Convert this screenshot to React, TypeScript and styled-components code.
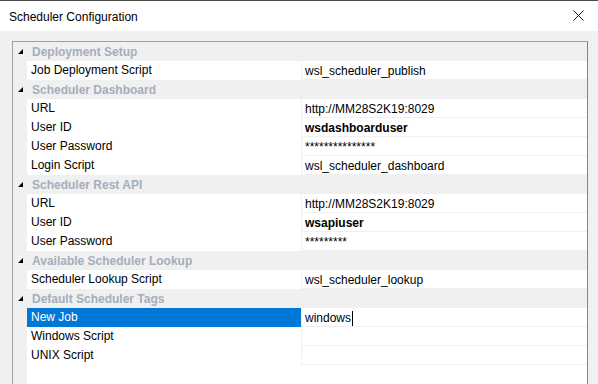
import React from "react";
import styled, { createGlobalStyle } from "styled-components";

type Item = { label: string; value?: string; bold?: boolean; selected?: boolean; editing?: boolean };
type Category = { title: string; items: Item[] };

const categories: Category[] = [
  { title: "Deployment Setup", items: [{ label: "Job Deployment Script", value: "wsl_scheduler_publish" }] },
  {
    title: "Scheduler Dashboard",
    items: [
      { label: "URL", value: "http://MM28S2K19:8029" },
      { label: "User ID", value: "wsdashboarduser", bold: true },
      { label: "User Password", value: "***************" },
      { label: "Login Script", value: "wsl_scheduler_dashboard" },
    ],
  },
  {
    title: "Scheduler Rest API",
    items: [
      { label: "URL", value: "http://MM28S2K19:8029" },
      { label: "User ID", value: "wsapiuser", bold: true },
      { label: "User Password", value: "*********" },
    ],
  },
  { title: "Available Scheduler Lookup", items: [{ label: "Scheduler Lookup Script", value: "wsl_scheduler_lookup" }] },
  {
    title: "Default Scheduler Tags",
    items: [
      { label: "New Job", value: "windows", selected: true, editing: true },
      { label: "Windows Script" },
      { label: "UNIX Script" },
    ],
  },
];

function App() {
  return (
    <>
      <GlobalStyle />
      <Window>
        <TitleBar>
          <Title>Scheduler Configuration</Title>
          <CloseButton>
            <svg width="11" height="11" viewBox="0 0 11 11">
              <path d="M0.5 0.5 L10.5 10.5 M10.5 0.5 L0.5 10.5" stroke="#1a1a1a" strokeWidth="1" fill="none" />
            </svg>
          </CloseButton>
        </TitleBar>
        <Body>
          <Grid>
            {categories.map((cat) => (
              <React.Fragment key={cat.title}>
                <CategoryRow>
                  <Glyph>
                    <svg width="6" height="6" viewBox="0 0 6 6">
                      <polygon points="5,0 5,5 0,5" fill="#000" />
                    </svg>
                  </Glyph>
                  <CategoryTitle>{cat.title}</CategoryTitle>
                </CategoryRow>
                {cat.items.map((item) => (
                  <PropRow key={cat.title + item.label}>
                    <Gutter />
                    <LabelCell $selected={item.selected}>{item.label}</LabelCell>
                    <ValueCell $bold={item.bold}>
                      {item.value}
                      {item.editing && <Caret />}
                    </ValueCell>
                  </PropRow>
                ))}
              </React.Fragment>
            ))}
            <Filler>
              <Gutter />
            </Filler>
          </Grid>
        </Body>
      </Window>
    </>
  );
}

const GlobalStyle = createGlobalStyle`
  html, body {
    margin: 0;
    padding: 0;
    background: #f0f0f0;
  }
  body {
    font-family: "Segoe UI", "Liberation Sans", Arial, sans-serif;
    font-size: 12px;
    color: #000;
  }
`;

const Window = styled.div`
  width: 598px;
  height: 384px;
  overflow: hidden;
  display: flex;
  flex-direction: column;
  background: #f0f0f0;
  border-top: 1px solid #4b4b4b;
  box-sizing: border-box;
`;

const TitleBar = styled.div`
  height: 30px;
  flex: none;
  background: #fff;
  display: flex;
  align-items: center;
  justify-content: space-between;
  padding: 0 14px 0 9px;
`;

const Title = styled.div`
  font-size: 12px;
  color: #000;
  margin-top: 1px;
`;

const CloseButton = styled.div`
  display: flex;
  align-items: center;
  margin-top: -1px;
`;

const Body = styled.div`
  flex: 1;
  padding: 10px 10px 0 12px;
  display: flex;
`;

const Grid = styled.div`
  flex: 1;
  height: 360px;
  border: 1px solid #a0a0a0;
  border-right-color: #828282;
  background: #fff;
  display: flex;
  flex-direction: column;
`;

const CategoryRow = styled.div`
  height: 19px;
  flex: none;
  background: #f0f0f0;
  display: flex;
  align-items: center;
`;

const Glyph = styled.div`
  width: 14px;
  display: flex;
  justify-content: center;
  padding-left: 1px;
  padding-top: 1px;
`;

const CategoryTitle = styled.div`
  padding-left: 4px;
  padding-top: 1px;
  font-weight: bold;
  color: #a4aebc;
`;

const PropRow = styled.div`
  height: 19px;
  flex: none;
  display: grid;
  grid-template-columns: 14px 275px 1fr;
  border-bottom: 1px solid #f0f0f0;
  box-sizing: border-box;
`;

const Gutter = styled.div`
  width: 14px;
  background: #f0f0f0;
`;

const LabelCell = styled.div<{ $selected?: boolean }>`
  padding-left: 4px;
  line-height: 19px;
  white-space: nowrap;
  border-right: 1px solid #f0f0f0;
  background: ${(p) => (p.$selected ? "#0078d7" : "#fff")};
  color: ${(p) => (p.$selected ? "#fff" : "#000")};
`;

const ValueCell = styled.div<{ $bold?: boolean }>`
  padding-left: 3px;
  padding-top: 1px;
  line-height: 17px;
  white-space: nowrap;
  display: flex;
  align-items: center;
  font-weight: ${(p) => (p.$bold ? "bold" : "normal")};
`;

const Caret = styled.span`
  width: 1px;
  height: 15px;
  background: #000;
  margin-left: 1px;
`;

const Filler = styled.div`
  flex: 1;
  display: flex;
`;

export default App;
